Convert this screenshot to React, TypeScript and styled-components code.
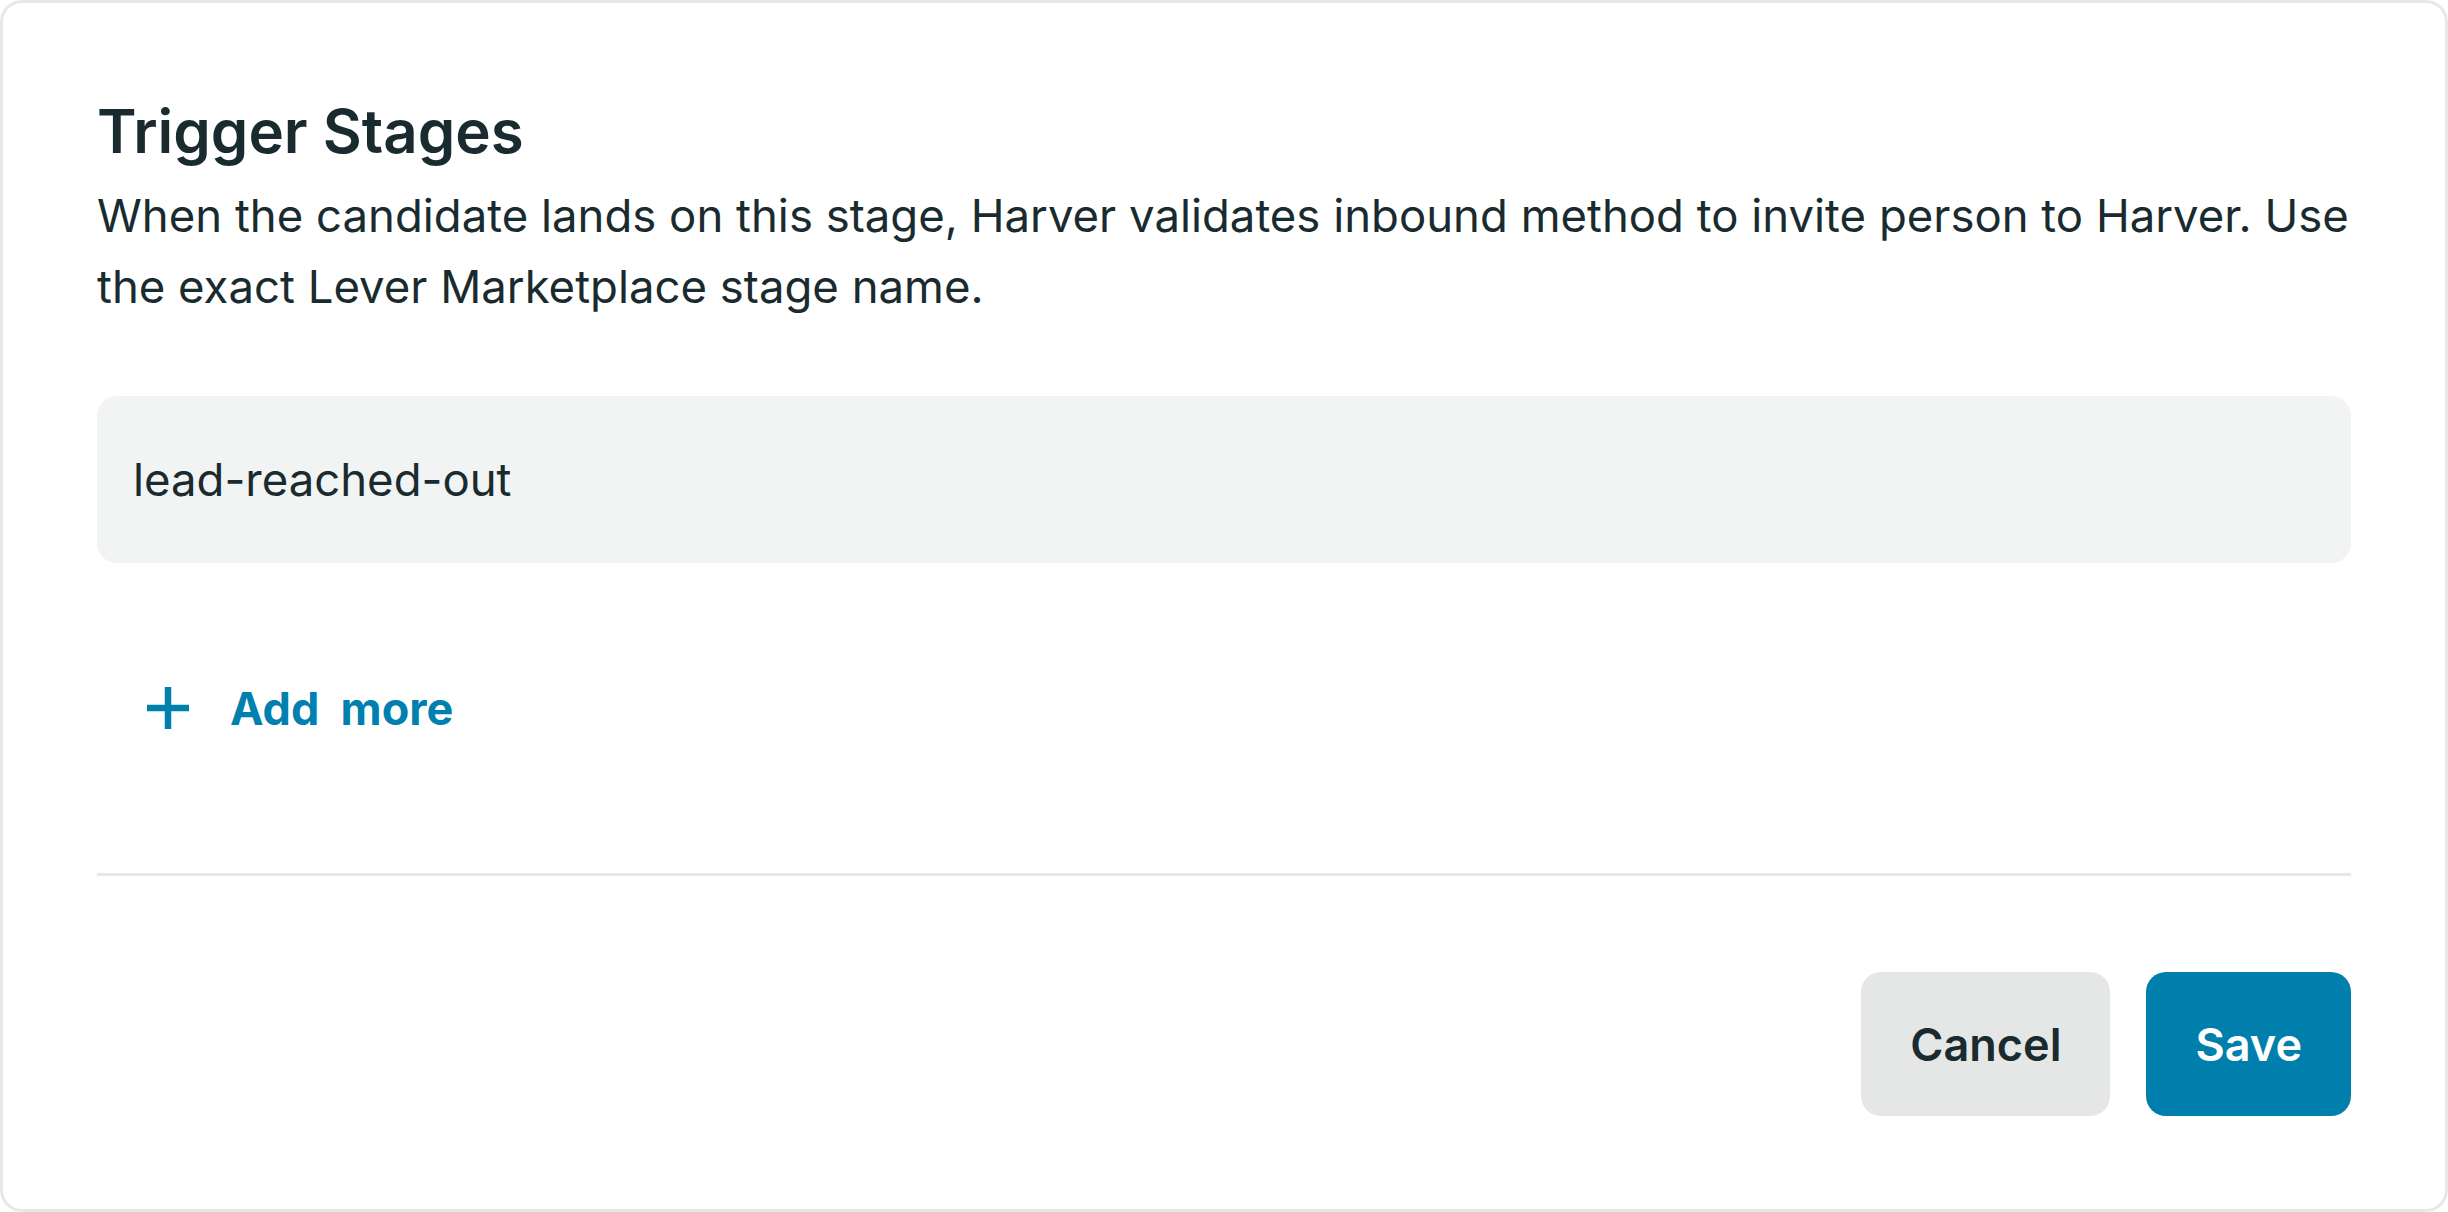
import styled, { createGlobalStyle } from "styled-components";

const GlobalStyle = createGlobalStyle`
  html, body {
    margin: 0;
    padding: 0;
    background: #ffffff;
  }
  * {
    box-sizing: border-box;
  }
`;

const PlusIcon = ({ className }: { className?: string }) => (
  <svg className={className} width="42" height="42" viewBox="0 0 42 42" fill="none">
    <path d="M21 0v42M0 21h42" stroke="currentColor" strokeWidth="6.5" />
  </svg>
);

const App = () => {
  return (
    <>
      <GlobalStyle />
      <Card>
        <Title>Trigger Stages</Title>
        <Description>
          When the candidate lands on this stage, Harver validates inbound method to invite person to
          Harver. Use the exact Lever Marketplace stage name.
        </Description>
        <StageInput type="text" defaultValue="lead-reached-out" />
        <AddMoreButton type="button">
          <PlusIcon />
          <span>{"Add  more"}</span>
        </AddMoreButton>
        <Divider />
        <Footer>
          <Button variant="secondary" type="button">
            Cancel
          </Button>
          <Button variant="primary" type="button">
            Save
          </Button>
        </Footer>
      </Card>
    </>
  );
};

const Card = styled.div`
  display: flex;
  flex-direction: column;
  height: 100vh;
  padding: 92px 94px 93px 94px;
  border: 3px solid #e6e8e8;
  border-radius: 22px;
  background: #ffffff;
  font-family: Inter, "Noto Sans", sans-serif;
  color: #1a2b2f;
`;

const Title = styled.h2`
  margin: 0;
  font-size: 60px;
  line-height: 72px;
  font-weight: 600;
`;

const Description = styled.p`
  margin: 13px 0 0 0;
  font-size: 45.5px;
  line-height: 71px;
  font-weight: 400;
`;

const StageInput = styled.input`
  margin-top: 74px;
  height: 167px;
  width: 100%;
  padding: 0 36px;
  border: none;
  outline: none;
  border-radius: 20px;
  background: #f2f3f3;
  font-family: inherit;
  font-size: 45.5px;
  color: #1a2b2f;
`;

const AddMoreButton = styled.button`
  display: flex;
  align-items: center;
  gap: 41px;
  align-self: flex-start;
  height: 100px;
  margin-top: 95px;
  padding: 0 0 0 50px;
  border: none;
  background: transparent;
  color: #0080ae;
  font-family: inherit;
  font-size: 45px;
  font-weight: 700;
  cursor: pointer;

  span {
    white-space: pre;
  }
`;

const Divider = styled.hr`
  width: 100%;
  height: 3px;
  margin: 115px 0 0 0;
  border: none;
  background: #e6e7e7;
`;

const Footer = styled.div`
  display: flex;
  justify-content: flex-end;
  gap: 36px;
  margin-top: 96px;
`;

const Button = styled.button<{ variant: "primary" | "secondary" }>`
  height: 144px;
  padding: 0 49px;
  border: none;
  border-radius: 20px;
  font-family: inherit;
  font-size: 45px;
  font-weight: 600;
  cursor: pointer;
  background: ${({ variant }) => (variant === "primary" ? "#007fad" : "#e5e7e6")};
  color: ${({ variant }) => (variant === "primary" ? "#ffffff" : "#1a2b2f")};
`;

export default App;
